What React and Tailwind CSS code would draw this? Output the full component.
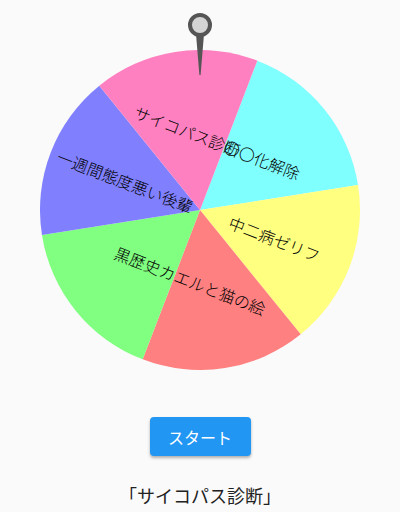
const items = [
  { label: '〇〇化解除', color: '#80ffff' },
  { label: '中二病ゼリフ', color: '#ffff80' },
  { label: 'カエルと猫の絵', color: '#ff8080' },
  { label: '黒歴史', color: '#80ff80' },
  { label: '一週間態度悪い後輩', color: '#8080ff' },
  { label: 'サイコパス診断', color: '#ff80c0' },
];

const R = 160;
const pt = (deg, r) => {
  const a = (deg * Math.PI) / 180;
  return [R + r * Math.sin(a), R - r * Math.cos(a)];
};

const Wheel = () => {
  const step = 360 / items.length;
  return (
    <svg width="320" height="320" viewBox="0 0 320 320">
      <g transform="rotate(21 160 160)">
        {items.map((it, i) => {
          const [x0, y0] = pt(i * step, R);
          const [x1, y1] = pt((i + 1) * step, R);
          return (
            <path
              key={it.label}
              d={`M160 160 L${x0} ${y0} A${R} ${R} 0 0 1 ${x1} ${y1} Z`}
              fill={it.color}
            />
          );
        })}
        {items.map((it, i) => {
          const [tx, ty] = pt(i * step + step / 2, 80);
          return (
            <text
              key={it.label}
              x={tx}
              y={ty}
              textAnchor="middle"
              dominantBaseline="central"
              fontSize="16"
              fontWeight="300"
              fontFamily="'Noto Sans CJK JP', sans-serif"
              fill="#000"
            >
              {it.label}
            </text>
          );
        })}
      </g>
    </svg>
  );
};

export default function App() {
  return (
    <div className="w-[400px] h-[512px] bg-[#fafafa] flex flex-col items-center font-['Noto_Sans_CJK_JP',sans-serif]">
      <div className="relative w-[400px] pt-[50px] flex justify-center">
        <Wheel />
        {/* pointer */}
        <svg className="absolute left-0 top-0" width="400" height="80" viewBox="0 0 400 80">
          <polygon points="196,34 204,34 200.6,75 199.4,75" fill="#555" />
          <circle cx="200" cy="25" r="10" fill="#d4d4d4" stroke="#555" strokeWidth="4" />
        </svg>
      </div>
      <button className="mt-[47px] w-[101px] h-[39px] rounded-[4px] bg-[#2196f3] text-white text-[16px] shadow-[0_2px_3px_rgba(0,0,0,0.3)]">
        スタート
      </button>
      <p className="mt-[26px] text-[18px] leading-[27px] text-[#212121]">「サイコパス診断」</p>
    </div>
  );
}
